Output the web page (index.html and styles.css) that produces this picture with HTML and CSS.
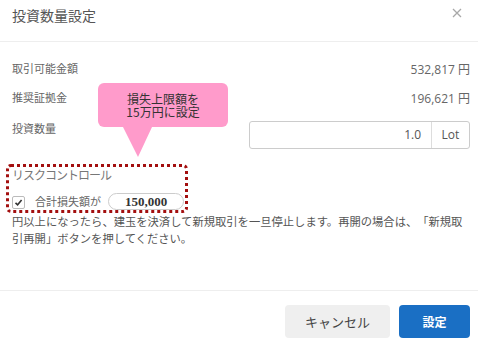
FILE: index.html
```html
<!DOCTYPE html>
<html lang="ja">
<head>
  <meta charset="UTF-8">
  <meta name="viewport" content="width=device-width, initial-scale=1.0">
  <title>投資数量設定</title>
  <link rel="stylesheet" href="styles.css">
</head>
<body>
  <div class="dialog">
    <div class="header">
      <h1>投資数量設定</h1>
      <span class="close">
        <svg width="10" height="10" viewBox="0 0 10 10"><path d="M1 1 L9 9 M9 1 L1 9" stroke="#a8a8a8" stroke-width="1.3"/></svg>
      </span>
    </div>

    <div class="body">
      <div class="row">
        <span class="label">取引可能金額</span>
        <span class="value">532,817 円</span>
      </div>
      <div class="row">
        <span class="label">推奨証拠金</span>
        <span class="value">196,621 円</span>
      </div>
      <div class="row row-input">
        <span class="label">投資数量</span>
        <div class="qty">
          <span class="qty-value">1.0</span>
          <span class="qty-unit">Lot</span>
        </div>
      </div>

      <div class="risk-title">リスクコントロール</div>
      <div class="risk-row">
        <span class="checkbox">
          <svg width="9" height="9" viewBox="0 0 9 9"><path d="M1.5 4.8 L3.6 6.8 L7.6 2" fill="none" stroke="#333" stroke-width="1.6"/></svg>
        </span>
        <span class="risk-label">合計損失額が</span>
        <span class="pill">150,000</span>
      </div>
      <p class="desc">円以上になったら、建玉を決済して新規取引を一旦停止します。再開の場合は、「新規取引再開」ボタンを押してください。</p>
    </div>

    <div class="footer">
      <button class="btn btn-cancel">キャンセル</button>
      <button class="btn btn-ok">設定</button>
    </div>

    <!-- annotation overlay -->
    <div class="callout">損失上限額を<br>15万円に設定</div>
    <div class="highlight"></div>
  </div>
</body>
</html>
```

FILE: styles.css
```css
body {
  margin: 0;
  padding: 0;
  background: #fff;
  font-family: "Open Sans", "Noto Sans CJK JP", sans-serif;
  color: #666;
}

.dialog {
  position: relative;
  width: 478px;
  height: 342px;
  display: flex;
  flex-direction: column;
  background: #fff;
  overflow: hidden;
}

.header {
  height: 34px;
  display: flex;
  align-items: flex-start;
  justify-content: space-between;
  padding: 7px 16px 0 12px;
  border-bottom: 1px solid #eee;
}

.header h1 {
  margin: 0;
  font-size: 14px;
  line-height: 18px;
  font-weight: normal;
  color: #555;
}

.close {
  display: flex;
  margin-top: 1px;
}

.body {
  padding: 15px 8px 0 12px;
}

.row {
  display: flex;
  justify-content: space-between;
  align-items: center;
  height: 24px;
  margin-bottom: 5px;
}

.row-input {
  height: 28px;
  margin-top: 11px;
  align-items: flex-start;
}

.label {
  font-size: 11px;
  line-height: 16px;
  color: #666;
}

.value {
  font-size: 12px;
  color: #666;
}

.qty {
  display: flex;
  width: 219px;
  height: 26px;
  border: 1px solid #ccc;
  border-radius: 3px;
  font-size: 12px;
  color: #555;
}

.qty-value {
  flex: 1;
  text-align: right;
  padding-right: 10px;
  line-height: 26px;
}

.qty-unit {
  width: 37px;
  text-align: center;
  line-height: 26px;
  border-left: 1px solid #ddd;
}

.risk-title {
  margin-top: 18px;
  font-size: 12px;
  line-height: 18px;
  letter-spacing: -1px;
  color: #777;
}

.risk-row {
  display: flex;
  align-items: center;
  height: 18px;
  margin-top: 7px;
}

.checkbox {
  width: 11px;
  height: 11px;
  border: 1px solid #bbb;
  border-radius: 2px;
  display: flex;
  align-items: center;
  justify-content: center;
  margin-top: 2px;
}

.risk-label {
  margin-left: 10px;
  font-size: 11px;
  color: #666;
}

.pill {
  margin-left: 7px;
  width: 74px;
  height: 15px;
  border: 1px solid #ccc;
  border-radius: 9px;
  text-align: center;
  font-family: "Liberation Serif", serif;
  font-weight: bold;
  font-size: 13px;
  line-height: 15px;
  color: #333;
}

.desc {
  margin: 3px 0 0;
  padding-right: 3px;
  font-size: 11.3px;
  line-height: 17px;
  text-spacing-trim: space-all;
  color: #555;
}

.footer {
  margin-top: auto;
  display: flex;
  justify-content: flex-end;
  gap: 9px;
  padding: 14px 8px 4px;
  border-top: 1px solid #eee;
}

.btn {
  height: 33px;
  border: none;
  border-radius: 4px;
  font-family: "Noto Sans CJK JP", sans-serif;
  font-size: 12px;
  cursor: pointer;
}

.btn-cancel {
  width: 105px;
  background: #efefef;
  color: #444;
  font-size: 13px;
}

.btn-ok {
  width: 71px;
  background: #1a6fc4;
  color: #fff;
  font-weight: bold;
}

.callout {
  position: absolute;
  left: 98px;
  top: 83px;
  width: 130px;
  height: 44px;
  background: #ff9bcb;
  border-radius: 6px;
  display: flex;
  align-items: center;
  justify-content: center;
  text-align: center;
  font-family: "Noto Sans CJK JP", sans-serif;
  font-size: 12px;
  line-height: 13.5px;
  color: #333;
}

.callout::after {
  content: "";
  position: absolute;
  left: 25px;
  top: 44px;
  border-left: 15px solid transparent;
  border-right: 14px solid transparent;
  border-top: 30px solid #ff9bcb;
}

.highlight {
  position: absolute;
  left: 6px;
  top: 164px;
  width: 176px;
  height: 43px;
  border: 3px dotted #a30f0f;
  border-radius: 5px;
}
```
